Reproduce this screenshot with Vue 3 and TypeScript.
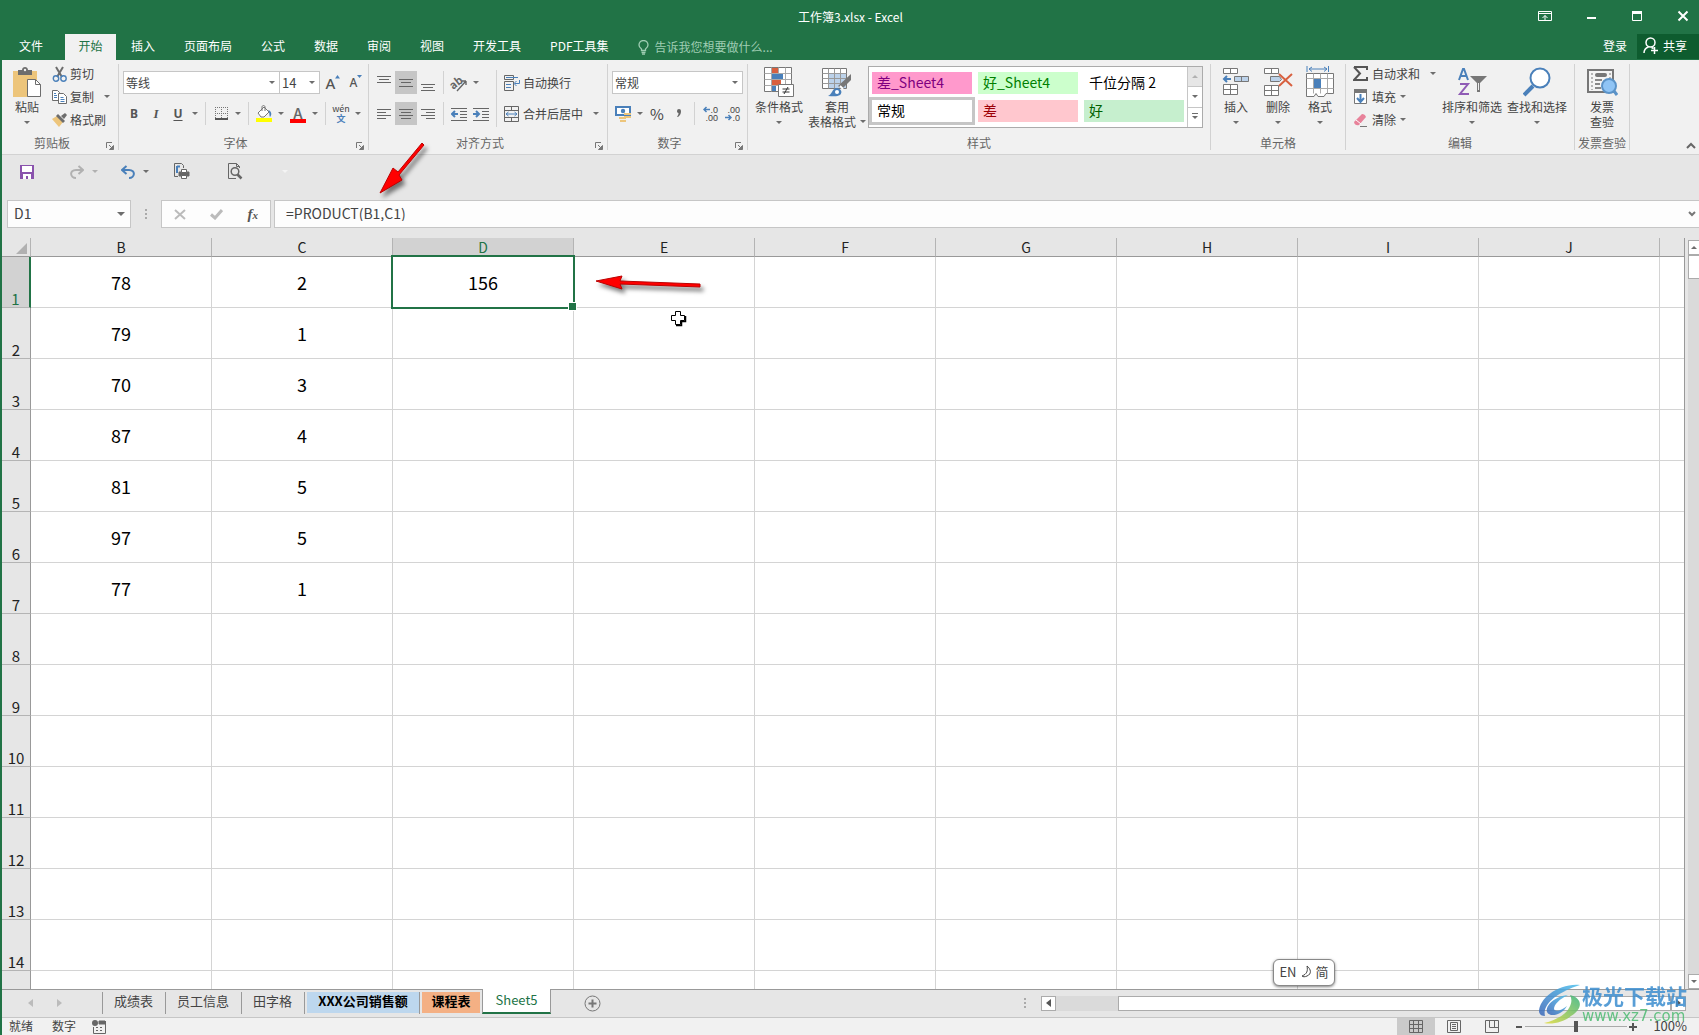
<script setup lang="ts">
import { ref } from 'vue'

const menuTabs = ['文件', '开始', '插入', '页面布局', '公式', '数据', '审阅', '视图', '开发工具', 'PDF工具集']
const columns = ['B', 'C', 'D', 'E', 'F', 'G', 'H', 'I', 'J']
const values: Record<string, string[]> = {
  B: ['78', '79', '70', '87', '81', '97', '77'],
  C: ['2', '1', '3', '4', '5', '5', '1'],
  D: ['156'],
}
const rows = Array.from({ length: 15 }, (_, i) => i + 1)
const cell = (col: string, row: number): string => values[col]?.[row - 1] ?? ''

const sheetTabs = [
  { name: '成绩表', kind: 'plain' },
  { name: '员工信息', kind: 'plain' },
  { name: '田字格', kind: 'plain' },
  { name: 'XXX公司销售额', kind: 'blue' },
  { name: '课程表', kind: 'orange' },
  { name: 'Sheet5', kind: 'opened' },
]

const cellStyles = [
  { name: '差_Sheet4', kind: 'pink' },
  { name: '好_Sheet4', kind: 'lime' },
  { name: '千位分隔 2', kind: 'none' },
  { name: '常规', kind: 'chosen' },
  { name: '差', kind: 'bad' },
  { name: '好', kind: 'good' },
]

const cellName = ref('D1')
const formula = ref('=PRODUCT(B1,C1)')
const zoom = ref(50)
</script>

<template>
  <div class="app">
    <header class="titlebar">
      <h1 class="title">工作簿3.xlsx - Excel</h1>
      <div class="winbtns">
        <button aria-label="功能区显示选项">
          <svg width="14" height="12" viewBox="0 0 14 12" fill="none" stroke="#fff"><path d="M.5 1.5h13v9H.5zM.5 3.5h13M7 10V5.500M4.500 8L7 5.500 9.500 8" /></svg>
        </button>
        <button aria-label="最小化">
          <svg width="12" height="12" viewBox="0 0 12 12"><path d="M2 7h9v2H2z" fill="#fff" /></svg>
        </button>
        <button aria-label="最大化">
          <svg width="12" height="12" viewBox="0 0 12 12"><path d="M1.500 2v8.500h9V2" fill="none" stroke="#fff" /><path d="M1 1h10v3H1z" fill="#fff" /></svg>
        </button>
        <button class="close" aria-label="关闭">
          <svg width="12" height="12" viewBox="0 0 12 12" stroke="#fff" stroke-width="2"><path d="M1.500 1.500l9 9M10.500 1.500l-9 9" /></svg>
        </button>
      </div>
    </header>

    <nav class="menu">
      <button v-for="t in menuTabs" :key="t" class="menutab" :class="{ file: t === '文件', current: t === '开始' }">{{ t }}</button>
      <button class="tell">
        <svg width="11" height="15" viewBox="0 0 11 15" fill="none" stroke="#9fcdb3" stroke-width="1.300"><path d="M3.500 10.500V9C2 8 1 6.800 1 5a4.500 4.500 0 0 1 9 0c0 1.800-1 3-2.500 4v1.500zM3.500 12.500h4M4 14.200h3" /></svg>
        告诉我您想要做什么...
      </button>
      <span class="grow"></span>
      <button class="login">登录</button>
      <button class="share">
        <svg width="16" height="17" viewBox="0 0 16 17" fill="none" stroke="#fff" stroke-width="1.500"><circle cx="7.500" cy="5.500" r="4.500" /><path d="M1 16c0-3 1.500-5 4.500-6M8.500 10.500l2 1M8 13.500h7M11.500 10v7" /></svg>
        共享
      </button>
    </nav>

    <section class="ribbon">
      <div class="group clip">
        <div class="body list-body">
          <button class="big paste">
            <span class="pic"><svg width="30" height="32" viewBox="0 0 30 32"><path d="M1 5h24v26H1z" fill="#edc57b" /><path d="M6 9V4h4c0-4 6-4 6 0h4v5z" fill="#6d6d6d" /><circle cx="13" cy="4" r="1.200" fill="#f1f1f1" /><path d="M15.500 13.500h8l5 5v12h-13z" fill="#fff" stroke="#6d6d6d" /><path d="M23.500 13.500v5h5" fill="none" stroke="#6d6d6d" /></svg></span>
            <span>粘贴</span><i class="caret under"></i>
          </button>
          <div class="list">
            <button><svg width="16" height="16" viewBox="0 0 16 16" fill="none"><path d="M4 1l6 10M11 1L5 11" stroke="#6d6d6d" stroke-width="2" /><circle cx="4" cy="12.500" r="2.700" stroke="#4a80ba" stroke-width="1.400" /><circle cx="11.500" cy="12.500" r="2.700" stroke="#4a80ba" stroke-width="1.400" /></svg>剪切</button>
            <button><svg width="16" height="16" viewBox="0 0 16 16" fill="#fff" stroke="#6d6d6d"><path d="M.5 1.500h5l2 2v8h-7z" /><path d="M6.500 4.500h5l3 3v7h-8z" /><path d="M2 4.500h2M2 6.500h3M2 8.500h3M8.500 8.500h3M8.500 10.500h4M8.500 12.500h4" stroke="#4a80ba" /></svg>复制<i class="caret far"></i></button>
            <button><svg width="16" height="16" viewBox="0 0 16 16"><path d="M0 7l5-3 6 6-4 5z" fill="#edc57b" /><path d="M4 4l2-2 7 7-2 2z" fill="#6d6d6d" /><path d="M9 4l4-3 2 2-3 4z" fill="#6d6d6d" /></svg>格式刷</button>
          </div>
        </div>
        <footer>剪贴板<button class="launch" aria-label="剪贴板设置"><svg width="8" height="8" viewBox="0 0 8 8" fill="none" stroke="#777"><path d="M.5 6V.5H6M3 3l3 3" /><path d="M7.500 3.500v4h-4z" fill="#777" /></svg></button></footer>
      </div>
      <i class="vsep"></i>

      <div class="group font">
        <div class="body rows">
          <div class="line">
            <label class="combo face"><select aria-label="字体"><option>等线</option></select><i class="caret"></i></label>
            <label class="combo size"><select aria-label="字号"><option>14</option></select><i class="caret"></i></label>
            <button class="ic grown" aria-label="增大字号"><b class="fa">A</b><svg width="5" height="4" viewBox="0 0 5 4"><path d="M0 3.500h5L2.500 0z" fill="#4a80ba" /></svg></button>
            <button class="ic" aria-label="减小字号"><b class="fa small">A</b><svg width="5" height="4" viewBox="0 0 5 4"><path d="M0 0h5L2.500 3z" fill="#4a80ba" /></svg></button>
          </div>
          <div class="line">
            <button class="ic"><b>B</b></button>
            <button class="ic"><b class="it">I</b></button>
            <button class="ic"><b class="un">U</b></button>
            <button class="dd" aria-label="下划线选项"><i class="caret"></i></button>
            <i class="sep"></i>
            <button class="ic" aria-label="边框"><svg width="13" height="13" viewBox="0 0 13 13" fill="none" stroke="#777"><path d="M.5 0v12M6.500 0v12M12.500 0v12M0 .5h13M0 6.500h13" stroke-dasharray="1 1" /><path d="M0 12h13" stroke="#555" stroke-width="2" /></svg></button>
            <button class="dd" aria-label="边框选项"><i class="caret"></i></button>
            <i class="sep"></i>
            <button class="ic" aria-label="填充颜色"><svg width="16" height="17" viewBox="0 0 16 17"><path d="M2 8l6-6 5 5-5 5H5z" fill="#fff" stroke="#777" /><path d="M6 6V2c0-2 3-2 3 0v4" fill="none" stroke="#777" /><path d="M12 5c4 1 4 5 2 7-1-2 0-4-2-7z" fill="#4a80ba" /><path d="M0 13h16v4H0z" fill="#ff0" /></svg></button>
            <button class="dd" aria-label="填充颜色选项"><i class="caret"></i></button>
            <button class="ic" aria-label="字体颜色"><span class="fcolor">A</span></button>
            <button class="dd" aria-label="字体颜色选项"><i class="caret"></i></button>
            <i class="sep"></i>
            <button class="ic wen"><span>wén</span><span class="zh">文</span></button>
            <button class="dd" aria-label="拼音选项"><i class="caret"></i></button>
          </div>
        </div>
        <footer>字体<button class="launch" aria-label="字体设置"><svg width="8" height="8" viewBox="0 0 8 8" fill="none" stroke="#777"><path d="M.5 6V.5H6M3 3l3 3" /><path d="M7.500 3.500v4h-4z" fill="#777" /></svg></button></footer>
      </div>
      <i class="vsep"></i>

      <div class="group align">
        <div class="body split">
          <div class="rows">
            <div class="line">
              <button class="ic" aria-label="顶端对齐"><svg width="14" height="16" viewBox="0 0 14 16" stroke="#666"><path d="M0 1.500h14M2 4.500h10M0 7.500h14" /></svg></button>
              <button class="ic on" aria-label="垂直居中"><svg width="14" height="16" viewBox="0 0 14 16" stroke="#666"><path d="M0 4.500h14M2 7.500h10M0 11.500h14" /></svg></button>
              <button class="ic" aria-label="底端对齐"><svg width="14" height="16" viewBox="0 0 14 16" stroke="#666"><path d="M0 9.500h14M2 12.500h10M0 15.500h14" /></svg></button>
              <i class="sep"></i>
              <button class="ic" aria-label="方向"><svg class="spill" width="18" height="18" viewBox="0 0 18 18"><text x="0" y="13" font-size="11" font-weight="bold" fill="#666" transform="rotate(-38 6 10)">ab</text><path d="M7 17L16 7M16 7h-4M16 7v4" fill="none" stroke="#666" stroke-width="1.400" /></svg></button>
              <button class="dd" aria-label="方向选项"><i class="caret"></i></button>
            </div>
            <div class="line">
              <button class="ic" aria-label="左对齐"><svg width="14" height="12" viewBox="0 0 14 12" stroke="#666"><path d="M0 1.500h14M0 4.500h9M0 7.500h14M0 10.500h9" /></svg></button>
              <button class="ic on" aria-label="居中"><svg width="14" height="12" viewBox="0 0 14 12" stroke="#666"><path d="M0 1.500h14M2 4.500h10M0 7.500h14M2 10.500h10" /></svg></button>
              <button class="ic" aria-label="右对齐"><svg width="14" height="12" viewBox="0 0 14 12" stroke="#666"><path d="M0 1.500h14M5 4.500h9M0 7.500h14M5 10.500h9" /></svg></button>
              <i class="sep"></i>
              <button class="ic" aria-label="减少缩进"><svg width="16" height="14" viewBox="0 0 16 14" fill="none" stroke="#666"><path d="M0 1.500h16M9 4.500h7M9 7.500h7M9 10.500h7M0 13.500h16" /><path d="M1 7h6M4 4L1 7l3 3" stroke="#4a80ba" stroke-width="2" /></svg></button>
              <button class="ic" aria-label="增加缩进"><svg width="16" height="14" viewBox="0 0 16 14" fill="none" stroke="#666"><path d="M0 1.500h16M9 4.500h7M9 7.500h7M9 10.500h7M0 13.500h16" /><path d="M0 7h6M3 4l3 3-3 3" stroke="#4a80ba" stroke-width="2" /></svg></button>
            </div>
          </div>
          <i class="sep tall"></i>
          <div class="rows wraps">
            <button class="txt"><svg width="17" height="16" viewBox="0 0 17 16" fill="none" stroke="#666"><path d="M.5 .5h9v4h-9zM.5 6.500h9v9h-9zM2 9.500h5M2 12.500h5" /><path d="M2 2.500h12M2 9.500h5M2 12.500h5M15.500 5v3.500h-5M12.500 6l-2.500 2.500 2.500 2.500" stroke="#4a80ba" /></svg>自动换行</button>
            <button class="txt"><svg width="17" height="16" viewBox="0 0 17 16" fill="none" stroke="#666"><path d="M.5 .5h14v15H.5zM.5 4.500h14M.5 11.500h14M7.500 .5v4M7.500 11.500v4" /><path d="M2 8h11M4.500 6L2 8l2.500 2M10.500 6L13 8l-2.500 2" stroke="#4a80ba" /></svg>合并后居中<i class="caret far"></i></button>
          </div>
        </div>
        <footer>对齐方式<button class="launch" aria-label="对齐设置"><svg width="8" height="8" viewBox="0 0 8 8" fill="none" stroke="#777"><path d="M.5 6V.5H6M3 3l3 3" /><path d="M7.500 3.500v4h-4z" fill="#777" /></svg></button></footer>
      </div>
      <i class="vsep"></i>

      <div class="group num">
        <div class="body rows">
          <div class="line"><label class="combo format"><select aria-label="数字格式"><option>常规</option></select><i class="caret"></i></label></div>
          <div class="line">
            <button class="ic" aria-label="会计数字格式"><svg width="17" height="16" viewBox="0 0 17 16"><path d="M1 1h14v8H1z" fill="#fff" stroke="#4a80ba" stroke-width="2" /><circle cx="8" cy="5" r="2.200" fill="#4a80ba" /><path d="M9 7h7v2H9zM9 10h7v2H9zM4 11h7v2H4zM5 14h6v2H5z" fill="#edc57b" /></svg></button>
            <button class="dd" aria-label="会计格式选项"><i class="caret"></i></button>
            <button class="ic pct">%</button>
            <button class="ic" aria-label="千位分隔样式"><svg width="6" height="10" viewBox="0 0 6 10"><path d="M1 2a2 2 0 0 1 4 0c0 3-1 4-3 6l-1-.5c1-1 1.500-2 1.500-3.500C1.500 4 1 3 1 2z" fill="#666" /></svg></button>
            <i class="sep"></i>
            <button class="ic dec" aria-label="增加小数位数"><span><svg width="7" height="7" viewBox="0 0 7 7" fill="none" stroke="#4a80ba" stroke-width="1.500"><path d="M1 3.500h6M3.500 1L1 3.500 3.500 6" /></svg>.0</span><span>.00</span></button>
            <button class="ic dec" aria-label="减少小数位数"><span>.00</span><span><svg width="7" height="7" viewBox="0 0 7 7" fill="none" stroke="#4a80ba" stroke-width="1.500"><path d="M0 3.500h6M3.500 1L6 3.500 3.500 6" /></svg>.0</span></button>
          </div>
        </div>
        <footer>数字<button class="launch" aria-label="数字设置"><svg width="8" height="8" viewBox="0 0 8 8" fill="none" stroke="#777"><path d="M.5 6V.5H6M3 3l3 3" /><path d="M7.500 3.500v4h-4z" fill="#777" /></svg></button></footer>
      </div>
      <i class="vsep"></i>

      <div class="group styles">
        <div class="body bigs">
          <button class="big cond">
            <span class="pic"><svg width="30" height="31" viewBox="0 0 30 31"><path d="M.5 .5h27v24H.5z" fill="#fff" stroke="#777" /><path d="M.5 6.500h27M.5 12.500h27M.5 18.500h27M7.500 .5v24M14.500 .5v24M21.500 .5v24" stroke="#aaa" fill="none" /><path d="M8 1h6v5H8zM8 13h9v5H8z" fill="#d8603f" /><path d="M8 7h11v5H8zM8 19h4v5H8z" fill="#4a80ba" /><path d="M14.500 17.500h15v12h-15z" fill="#fff" stroke="#777" /><path d="M18.500 22h7M18.500 25h7M24 20l-4 7" stroke="#333" fill="none" /></svg></span>
            <span>条件格式</span><i class="caret under"></i>
          </button>
          <button class="big tablefmt">
            <span class="pic"><svg width="30" height="29" viewBox="0 0 30 29"><path d="M.5 .5h24v20H.5z" fill="#fff" stroke="#777" /><path d="M6 6h18v14H6z" fill="#bcd2ea" /><path d="M.5 5.500h24M.5 10.500h24M.5 15.500h24M6.500 .5v20M12.500 .5v20M18.500 .5v20" stroke="#999" fill="none" /><path d="M29 6v6l-9 9-4-3z" fill="#777" /><path d="M18 18l3 3" stroke="#fff" stroke-width="2" /><path d="M6 28c4-1 4-8 9-8 4 1 6 4 3 7-3 2-8 1-12 1z" fill="#4a80ba" /><circle cx="15" cy="24" r="2" fill="#fff" /></svg></span>
            <span>套用</span><span class="with">表格格式<i class="caret"></i></span>
          </button>
          <div class="gallery">
            <div class="swatches">
              <button v-for="s in cellStyles" :key="s.name" class="swatch" :class="s.kind">{{ s.name }}</button>
            </div>
            <div class="scroller">
              <button class="dim" aria-label="上一行"><i class="caret up"></i></button>
              <button aria-label="下一行"><i class="caret"></i></button>
              <button aria-label="其他样式"><i class="caret more"></i></button>
            </div>
          </div>
        </div>
        <footer>样式</footer>
      </div>
      <i class="vsep"></i>

      <div class="group cells">
        <div class="body bigs">
          <button class="big">
            <span class="pic"><svg width="28" height="28" viewBox="0 0 28 28" fill="#fff" stroke="#777"><path d="M1.500 .5h14v5h-14zM8.500 .5v5M1.500 16.500h14v10h-14zM8.500 16.500v10M1.500 21.500h14" /><path d="M12.500 8.500h14v5h-14zM19.500 8.500v5" fill="#bcd2ea" /><path d="M2 11h7M5 8l-3 3 3 3" fill="none" stroke="#4a80ba" stroke-width="2" /></svg></span>
            <span>插入</span><i class="caret under"></i>
          </button>
          <button class="big">
            <span class="pic"><svg width="30" height="28" viewBox="0 0 30 28" fill="#fff" stroke="#777"><path d="M1.500 .5h14v5h-14zM8.500 .5v5M1.500 17.500h14v10h-14zM8.500 17.500v10M1.500 22.500h14" /><path d="M7.500 8.500h9l2 3-2 2h-9z" fill="#bcd2ea" /><path d="M16 6l13 12M29 6L16 18" fill="none" stroke="#d8603f" stroke-width="2" /></svg></span>
            <span>删除</span><i class="caret under"></i>
          </button>
          <button class="big">
            <span class="pic"><svg width="28" height="32" viewBox="0 0 28 32" fill="#fff" stroke="#777"><path d="M.5 7.500h27v20H20l-2 3h-6l-2-3-2 3H.5z" /><path d="M.5 12.500h27M.5 22.500h27M7.500 7.500v20M14.500 7.500v20M21.500 7.500v20" stroke="#aaa" /><path d="M8 13h7v9H8z" fill="#4a80ba" stroke="none" /><path d="M1 0v6M22.500 0v6M3 3h18M6 1L3 3l3 2.500M18 1l3 2-3 2.500" fill="none" stroke="#4a80ba" /></svg></span>
            <span>格式</span><i class="caret under"></i>
          </button>
        </div>
        <footer>单元格</footer>
      </div>
      <i class="vsep"></i>

      <div class="group edit">
        <div class="body list-body">
          <div class="list">
            <button><svg width="15" height="15" viewBox="0 0 15 15"><path d="M1 1h13v3M1 1l6 6.500L1 14h13v-3" fill="none" stroke="#555" stroke-width="2" /></svg>自动求和<i class="caret far"></i></button>
            <button><svg width="15" height="16" viewBox="0 0 15 16"><path d="M1.500 1.500h12v13h-12z" fill="#fff" stroke="#777" /><path d="M1 0h13v4H1z" fill="#777" /><path d="M7.500 5v8M4 9l3.500 4L11 9" fill="none" stroke="#4a80ba" stroke-width="2" /></svg>填充<i class="caret"></i></button>
            <button><svg width="15" height="14" viewBox="0 0 15 14"><path d="M1 9l8-8q3 0 4 3l-7 8q-4 1-5-3z" fill="#e8829a" /><path d="M3 7l5 4" stroke="#fff" /><path d="M7 13.500h7" stroke="#777" /></svg>清除<i class="caret"></i></button>
          </div>
          <button class="big wide">
            <span class="pic"><svg width="30" height="30" viewBox="0 0 30 30" fill="none" stroke-width="2"><path d="M2 13L6 2h1l4 11M3 9h7" stroke="#4a80ba" /><path d="M3 17h8L3 27h9" stroke="#8f5bb5" /><path d="M13 9h17l-7 7v9h-3v-9z" fill="#777" /><path d="M21.500 16v7" stroke="#eee" stroke-width="1" /></svg></span>
            <span>排序和筛选</span><i class="caret under"></i>
          </button>
          <button class="big wide">
            <span class="pic"><svg width="28" height="30" viewBox="0 0 28 30"><path d="M1 28l9-9" stroke="#4a80ba" stroke-width="4" /><circle cx="17" cy="11" r="9.500" fill="#fff" stroke="#4a80ba" stroke-width="2" /></svg></span>
            <span>查找和选择</span><i class="caret under"></i>
          </button>
        </div>
        <footer>编辑</footer>
      </div>
      <i class="vsep"></i>

      <div class="group invoice">
        <div class="body bigs">
          <button class="big">
            <span class="pic"><svg width="32" height="28" viewBox="0 0 32 28"><path d="M2 2h25v22H2z" fill="#f4f4f4" stroke="#777" stroke-width="2" /><path d="M6 5v17M24 5v6" stroke="#777" stroke-dasharray="2 2" /><rect x="9" y="5" width="12" height="4" rx="2" fill="#777" /><path d="M9 12h7M9 16h5M9 20h6" stroke="#666" stroke-width="1.500" /><circle cx="23" cy="18" r="7" fill="#8fc4f5" stroke="#5b93c8" stroke-width="2" /><path d="M28 23l3 4" stroke="#5b93c8" stroke-width="3" /></svg></span>
            <span>发票</span><span>查验</span>
          </button>
        </div>
        <footer>发票查验</footer>
      </div>
      <i class="vsep"></i>
      <span class="grow"></span>
      <button class="collapse" aria-label="折叠功能区"><svg width="10" height="7" viewBox="0 0 10 7" fill="none" stroke="#666" stroke-width="2"><path d="M1 6l4-4 4 4" /></svg></button>
    </section>

    <div class="quick">
      <button aria-label="保存"><svg width="14" height="14" viewBox="0 0 14 14"><path d="M0 0h14v14H0z" fill="#8a53ad" /><path d="M2 1h10v6H2zM3 9h8v5H8v-3H6v3H3z" fill="#fff" /></svg></button>
      <button class="q2" aria-label="恢复"><svg width="14" height="14" viewBox="0 0 14 14" fill="none" stroke="#b1b1b1" stroke-width="2"><path d="M13 5H6C-1 5 0 13 6 13M8.500 1L13 5 8.500 9" /></svg><i class="caret pale"></i></button>
      <button class="q3" aria-label="撤消"><svg width="14" height="14" viewBox="0 0 14 14" fill="none" stroke="#4a80ba" stroke-width="2"><path d="M1 5h7c7 0 6 8 0 8M5.500 1L1 5l4.500 4" /></svg><i class="caret"></i></button>
      <button class="q4" aria-label="快速打印"><svg width="17" height="17" viewBox="0 0 17 17" fill="none" stroke="#666"><path d="M5 13.500H1.500V.5h7l2 2V5" /><path d="M4 3.500h3M4 3v7" stroke="#4a80ba" stroke-width="2" /><path d="M6 9h10v4H6z" fill="#666" /><path d="M8.500 6.500h5v3h-5zM8.500 12.500h5v3h-5z" fill="#fff" /></svg></button>
      <button class="q5" aria-label="打印预览"><svg width="15" height="17" viewBox="0 0 15 17" fill="none" stroke="#666"><path d="M8 15.500H.5V.5h8l3 3V5M8.500 .5v3h3" /><circle cx="7" cy="8.500" r="3.800" stroke-width="1.500" /><path d="M9.500 11.500l4 4" stroke-width="2.500" /></svg></button>
      <button class="q6" aria-label="自定义快速访问工具栏"><i class="caret white"></i></button>
    </div>

    <div class="fbar">
      <div class="namebox"><input v-model="cellName" aria-label="名称框" /><button aria-label="名称列表"><i class="caret large"></i></button></div>
      <i class="dots"></i>
      <div class="fxbox">
        <button aria-label="取消"><svg width="12" height="11" viewBox="0 0 12 11" stroke="#bbb" stroke-width="2"><path d="M1 1l10 9M11 1L1 10" /></svg></button>
        <button aria-label="输入"><svg width="13" height="11" viewBox="0 0 13 11" fill="none" stroke="#bbb" stroke-width="3"><path d="M1 5.500L5 9l7-8" /></svg></button>
        <button class="fx" aria-label="插入函数">f<sub>x</sub></button>
      </div>
      <div class="formula"><input v-model="formula" aria-label="编辑栏" /><button aria-label="展开编辑栏"><svg width="8" height="6" viewBox="0 0 8 6" fill="none" stroke="#777" stroke-width="2"><path d="M1 1l3 3 3-3" /></svg></button></div>
    </div>

    <main class="work">
      <div class="gridwrap">
        <table class="grid">
          <colgroup><col class="rh" /><col v-for="c in columns" :key="c" class="dc" /><col /></colgroup>
          <thead>
            <tr><th class="corner"><svg width="11" height="11" viewBox="0 0 11 11"><path d="M11 0v11H0z" fill="#b1b1b1" /></svg></th><th v-for="c in columns" :key="c" scope="col" :class="{ sel: c === 'D' }">{{ c }}</th><th class="rest"></th></tr>
          </thead>
          <tbody>
            <tr v-for="r in rows" :key="r">
              <th scope="row" :class="{ sel: r === 1 }">{{ r < 15 ? r : '' }}</th>
              <td v-for="c in columns" :key="c" :class="{ active: c === 'D' && r === 1 }">{{ cell(c, r) }}</td>
              <td class="rest"></td>
            </tr>
          </tbody>
        </table>
        <svg class="cursor" width="17" height="17" viewBox="0 0 17 17"><path d="M5.500 1.500h5v4h4v5h-4v4h-5v-4h-4v-5h4z" fill="#fff" stroke="#000" /><path d="M6 15.500h5.500V11.500H15.500V6" fill="none" stroke="#000" stroke-width="1.500" /></svg>
        <svg class="arrow side" width="116" height="30" viewBox="0 0 116 30"><path d="M4 9l26-5-2 5 80 3v3l-80-3 2 5z" fill="#f00" stroke="#b00" stroke-width="1" /></svg>
        <div class="ime">EN<svg width="11" height="13" viewBox="0 0 11 13" fill="none" stroke="#444"><path d="M6 1c4 3 5 8 0 10-2 1-4 1-5 0 5-2 6-5 5-10z" /></svg>简</div>
      </div>
      <div class="vscroll">
        <button aria-label="向上滚动"><i class="caret up"></i></button>
        <span class="thumb"></span>
        <span class="grow"></span>
        <button aria-label="向下滚动"><i class="caret"></i></button>
      </div>
    </main>

    <div class="sheets">
      <button class="nav" aria-label="上一张工作表"><svg width="5" height="8" viewBox="0 0 5 8"><path d="M5 0v8L0 4z" fill="#bbb" /></svg></button>
      <button class="nav" aria-label="下一张工作表"><svg width="5" height="8" viewBox="0 0 5 8"><path d="M0 0v8l5-4z" fill="#bbb" /></svg></button>
      <div class="tabs">
        <button v-for="s in sheetTabs" :key="s.name" class="sheet" :class="s.kind"><span>{{ s.name }}</span></button>
      </div>
      <button class="add" aria-label="新工作表"><svg width="17" height="17" viewBox="0 0 17 17" fill="none" stroke="#777"><circle cx="8.500" cy="8.500" r="7.500" /><path d="M8.500 4.500v8M4.500 8.500h8" stroke-width="2" /></svg></button>
      <span class="grow"></span>
      <i class="dots"></i>
      <div class="hscroll">
        <button aria-label="向左滚动"><svg width="5" height="8" viewBox="0 0 5 8"><path d="M5 0v8L0 4z" fill="#555" /></svg></button>
        <span class="track"></span><span class="thumb"></span>
        <button aria-label="向右滚动"><svg width="5" height="8" viewBox="0 0 5 8"><path d="M0 0v8l5-4z" fill="#555" /></svg></button>
      </div>
    </div>

    <footer class="status">
      <span class="word">就绪</span><span class="word">数字</span>
      <svg width="14" height="14" viewBox="0 0 14 14" fill="none" stroke="#666"><circle cx="3" cy="3" r="3" fill="#666" stroke="none" /><path d="M7 1h6v3H7z" fill="#666" /><path d="M1.500 7v6.500h12V1" /><path d="M4 7.500h2M8 7.500h2M4 10.500h2M8 10.500h2" /></svg>
      <span class="grow"></span>
      <button class="view on" aria-label="普通"><svg width="14" height="13" viewBox="0 0 14 13" fill="none" stroke="#666"><path d="M.5 .5h13v12H.5zM.5 4.500h13M.5 8.500h13M4.500 .5v12M9.500 .5v12" /></svg></button>
      <button class="view" aria-label="页面布局"><svg width="14" height="13" viewBox="0 0 14 13" fill="none" stroke="#666"><path d="M.5 .5h13v12H.5zM3.500 2.500h7v8h-7zM5 4.500h4M5 6.500h4M5 8.500h4" /></svg></button>
      <button class="view" aria-label="分页预览"><svg width="14" height="13" viewBox="0 0 14 13" fill="none" stroke="#666"><path d="M.5 .5h13v12H.5zM4.500 .5v7h9M9.500 .5v7" /></svg></button>
      <button class="zb minus" aria-label="缩小"><svg width="8" height="8" viewBox="0 0 8 8"><path d="M1 3h6v2H1z" fill="#555" /></svg></button>
      <input v-model="zoom" class="slider" type="range" min="0" max="100" aria-label="缩放" />
      <button class="zb" aria-label="放大"><svg width="8" height="8" viewBox="0 0 8 8"><path d="M0 3h8v2H0zM3 0h2v8H3z" fill="#555" /></svg></button>
      <span class="pc">100%</span>
    </footer>

    <svg class="arrow down" width="60" height="66" viewBox="0 0 60 66"><path d="M48 6L24 35l-5-4L6 56l22-13-3-5L50 8z" fill="#f00" stroke="#b00" stroke-width="1" /></svg>

    <div class="mark">
      <svg width="42" height="40" viewBox="0 0 42 40">
        <defs>
          <linearGradient id="blue" x1="0" y1="1" x2="1" y2="0"><stop offset="0" stop-color="#3a66b8" /><stop offset="1" stop-color="#4cc0ee" /></linearGradient>
          <linearGradient id="green" x1="0" y1="1" x2="1" y2="0"><stop offset="0" stop-color="#e3dc3c" /><stop offset="1" stop-color="#35b27c" /></linearGradient>
        </defs>
        <path d="M41 1C20-1 0 14 0 28c1 3 3 4 6 4C3 20 19 8 41 1z" fill="url(#blue)" />
        <path d="M29 11C17 12 6 21 8 28c3 6 15 3 20-6-6 5-12 6-13 3 0-5 6-10 14-14z" fill="url(#blue)" />
        <path d="M31 11c13 3 13 14 1 21-7 6-19 9-27 7 13-3 22-9 25-15 3-5 3-9 1-13z" fill="url(#green)" />
      </svg>
      <div class="marktext"><strong>极光下载站</strong><span>www.xz7.com</span></div>
    </div>
  </div>
</template>

<style>
body { overflow: hidden; }
</style>

<style scoped>
* { box-sizing: border-box; }
.app {
  position: relative;
  display: flex;
  flex-direction: column;
  height: 100vh;
  overflow: hidden;
  border-left: 2px solid #217346;
  background: #e6e6e6;
  color: #444;
  font: 12px/16px "Noto Sans CJK SC", sans-serif;
}
button, input, select { font: inherit; color: inherit; margin: 0; padding: 0; border: 0; background: none; border-radius: 0; outline: 0; }
button { display: flex; align-items: center; justify-content: center; flex: none; white-space: nowrap; }
svg { display: block; flex: none; }
.grow { flex: 1; }
.caret { display: block; flex: none; width: 0; height: 0; border: 3px solid transparent; border-top-color: #6d6d6d; border-bottom: 0; }
.caret.up { border-top: 0; border-bottom: 3px solid #6d6d6d; }
.caret.large { border-width: 4px 4px 0; }
.caret.pale { border-top-color: #b1b1b1; }
.caret.white { border-top-color: #f4f4f4; }

.titlebar { position: relative; height: 34px; flex: none; background: #217346; color: #fff; }
.title { margin: 0; text-align: center; font-size: 12px; font-weight: 400; line-height: 34px; }
.winbtns { position: absolute; right: 0; top: 0; display: flex; }
.winbtns button { width: 46px; height: 32px; }
.winbtns .close { width: 32px; margin-left: 7px; }
.menu { display: flex; height: 26px; flex: none; background: #217346; color: #fff; }
.menutab { padding: 0 14px 2px; margin-right: 1px; }
.menutab.file { width: 63px; padding: 0 5px 2px 0; margin: 0; }
.menutab.current { width: 51px; background: #f1f1f1; color: #217346; }
.tell { gap: 6px; margin-left: 14px; color: #9fcdb3; }
.login { margin-right: 10px; padding-bottom: 2px; }
.share { width: 62px; gap: 4px; height: 25px; padding: 0 6px 2px 0; background: #0e5c2f; }

.ribbon { display: flex; height: 95px; flex: none; background: #f1f1f1; border-bottom: 1px solid #d2d2d2; }
.vsep { width: 1px; margin: 4px 0; background: #d2d2d2; flex: none; }
.group { display: flex; flex-direction: column; flex: none; }
.clip { width: 116px; }
.font { width: 249px; }
.align { width: 238px; }
.num { width: 139px; }
.styles { width: 462px; }
.cells { width: 134px; }
.edit { width: 228px; }
.invoice { width: 54px; }
.body { flex: 1; display: flex; }
.group footer { position: relative; height: 21px; line-height: 19px; text-align: center; color: #666; white-space: nowrap; }
.clip footer { padding-right: 16px; }
.font footer { padding-right: 16px; }
.align footer { padding-right: 16px; }
.num footer { padding-right: 16px; }
.launch { position: absolute; right: 4px; bottom: 4px; }
.list { padding-top: 2px; }
.list button { height: 23px; gap: 4px; justify-content: flex-start; }
.clip .list button { gap: 2px; }
.clip .far { margin-left: 8px; }
.far { margin-left: 8px; }
.edit .list { width: 93px; padding-left: 7px; }
.edit .far { margin-left: 6px; }
.big { flex-direction: column; justify-content: flex-start; height: 73px; padding-top: 6px; line-height: 15px; }
.pic { display: flex; align-items: center; height: 32px; margin-bottom: 1px; }
.under { margin-top: 7px; }
.paste { width: 50px; }
.cells .bigs { padding-left: 4px; }
.cells .big { width: 42px; }
.edit .wide { width: 66px; }
.edit .wide:last-child { width: 64px; }
.invoice .big { width: 54px; }
.cond { width: 62px; }
.tablefmt { width: 54px; }
.with { display: flex; align-items: center; gap: 4px; }
.rows { display: flex; flex-direction: column; gap: 8px; padding: 11px 0 0 4px; }
.line { display: flex; height: 23px; }
.ic { width: 22px; height: 23px; }
.on { background: #c6c6c6; }
.dd { width: 12px; }
.sep { width: 1px; margin: 0 4px; background: #d2d2d2; flex: none; }
.tall { margin: 10px 4px 6px; }
.combo { position: relative; display: flex; align-items: center; height: 23px; border: 1px solid #c6c6c6; background: #fff; }
.combo select { width: 100%; height: 100%; padding-left: 2px; appearance: none; }
.combo .caret { position: absolute; right: 4px; top: 9px; }
.face { width: 157px; }
.size { width: 41px; margin-left: -1px; }
.size select { font-size: 13px; }
.format { width: 131px; }
.grown { margin: 0 1px 0 2px; }
.fa { font-size: 15px; font-weight: 500; color: #666; }
.fa.small { font-size: 12px; }
.fa + svg { margin-bottom: 12px; }
.ic b { font-family: "Noto Sans", sans-serif; color: #555; }
.ic .it { font-style: italic; font-family: "Liberation Serif", serif; font-size: 13px; }
.un { text-decoration: underline; text-underline-offset: 2px; }
.spill { overflow: visible; }
.fcolor { width: 16px; height: 18px; line-height: 15px; font-size: 15px; font-weight: 500; border-bottom: 4px solid #f00; color: #666; text-align: center; }
.wen { flex-direction: column; font-size: 9px; line-height: 9px; }
.wen .zh { line-height: 11px; color: #4a80ba; font-weight: 700; }
.pct { font-size: 15px; }
.dec { flex-direction: column; align-items: flex-end; padding-right: 3px; font: 9px/8px "Liberation Sans", sans-serif; }
.dec span { display: flex; align-items: center; }
.wraps { padding-left: 3px; }
.txt { justify-content: flex-start; gap: 2px; height: 23px; }

.gallery { display: flex; height: 62px; margin-top: 6px; border: 1px solid #ababab; background: #fff; margin-left: 4px; }
.swatches { display: grid; grid-template-columns: repeat(3, 100px); grid-auto-rows: 22px; gap: 6px; padding: 5px 3px; }
.swatch { justify-content: flex-start; padding: 0 0 2px 5px; font-size: 14px; color: #000; }
.pink { background: #ff99cc; color: #800080; }
.lime { background: #ccffcc; color: #008000; }
.bad { background: #ffc7ce; color: #9c0006; }
.good { background: #c6efce; color: #006100; }
.chosen { outline: 3px solid #c6c6c6; }
.scroller { width: 15px; display: flex; flex-direction: column; border-left: 1px solid #c6c6c6; }
.scroller button { flex: 1; border-bottom: 1px solid #c6c6c6; }
.scroller button:last-child { border-bottom: 0; }
.scroller .dim { background: #e6e6e6; }
.dim .up { border-bottom-color: #b1b1b1; }
.more { position: relative; }
.more::before { content: ""; position: absolute; left: -3px; top: -6px; width: 6px; height: 1px; background: #6d6d6d; }
.collapse { align-self: flex-end; width: 16px; height: 18px; }

.quick { display: flex; align-items: center; height: 45px; padding: 0 0 12px 18px; flex: none; }
.quick button { gap: 8px; }
.q2 { margin-left: 36px; }
.q3 { margin-left: 23px; }
.q4 { margin-left: 24px; }
.q5 { margin-left: 38px; }
.q6 { margin-left: 39px; }

.fbar { display: flex; height: 38px; padding-bottom: 10px; flex: none; font-size: 14px; }
.namebox, .fxbox, .formula { display: flex; align-items: center; border: 1px solid #c6c6c6; background: #fdfdfd; }
.namebox { width: 124px; margin-left: 5px; }
.namebox input { flex: 1; min-width: 0; padding: 0 0 2px 6px; }
.namebox button { width: 18px; }
.dots { width: 2px; height: 11px; align-self: center; background: repeating-linear-gradient(#aaa 0 2px, transparent 2px 4px); flex: none; }
.fbar .dots { margin: 0 14px; }
.fxbox { width: 110px; justify-content: space-around; }
.fx { font: italic 700 15px/15px "Liberation Serif", serif; color: #555; }
.fx sub { font-size: 11px; vertical-align: baseline; margin-top: 3px; }
.formula { flex: 1; margin-left: 3px; border-right: 0; }
.formula input { flex: 1; padding: 0 0 2px 11px; }
.formula button { width: 14px; }

.work { display: flex; flex: 1; min-height: 0; }
.gridwrap { position: relative; flex: 1; min-width: 0; overflow: hidden; }
.grid { width: 100%; table-layout: fixed; border-collapse: separate; border-spacing: 0; background: #fff; border-right: 1px solid #999; }
.rh { width: 29px; }
.dc { width: 181px; }
.grid th { padding: 0; font-weight: 400; font-size: 14px; color: #222; background: #e6e6e6; border-right: 1px solid #b4b4b4; }
.grid thead th { height: 19px; line-height: 18px; border-bottom: 1px solid #999; }
.grid thead .rest { border-right: 0; }
.corner svg { margin: 3px 3px 0 auto; }
.grid tbody th { height: 51px; vertical-align: bottom; line-height: 16px; font-size: 15px; border-right-color: #999; border-bottom: 1px solid #b4b4b4; }
.grid .sel { background: #d2d2d2; color: #217346; }
.grid tbody th.sel { border-right: 2px solid #217346; }
.grid td { padding: 0; text-align: center; font-size: 18px; line-height: 24px; color: #000; border-right: 1px solid #d4d4d4; border-bottom: 1px solid #d4d4d4; }
.grid td.rest { border-right: 0; }
.active { position: relative; z-index: 1; }
.active::before { content: ""; position: absolute; inset: -2px; border: 2px solid #217346; }
.active::after { content: ""; position: absolute; right: -4px; bottom: -4px; width: 7px; height: 7px; background: #217346; border: 1px solid #fff; }
.arrow { position: absolute; z-index: 3; filter: drop-shadow(3px 4px 2px rgba(0, 0, 0, 0.5)); }
.arrow.side { left: 590px; top: 34px; }
.arrow.down { left: 372px; top: 137px; }
.cursor { position: absolute; left: 668px; top: 72px; }
.ime { position: absolute; right: 350px; bottom: 3px; display: flex; align-items: center; justify-content: center; gap: 4px; width: 62px; height: 27px; padding-bottom: 2px; border: 1px solid #888; border-radius: 6px; background: #fff; box-shadow: 0 1px 3px rgba(0, 0, 0, 0.5); font-size: 13px; z-index: 2; }
.vscroll { display: flex; flex-direction: column; width: 11px; margin: 2px 0 0 3px; background: #dadada; flex: none; }
.vscroll button { height: 15px; background: #fff; border: 1px solid #ababab; border-right: 0; }
.vscroll .thumb { height: 24px; background: #fff; border: 1px solid #ababab; border-right: 0; }

.sheets { display: flex; align-items: center; height: 28px; padding-bottom: 1px; border-top: 1px solid #999; flex: none; font-size: 13px; }
.nav { width: 29px; }
.nav:first-child { margin-left: 14px; }
.tabs { display: flex; align-self: stretch; margin-left: 28px; }
.sheet { align-items: flex-start; height: 22px; margin-top: 2px; border-left: 1px solid #999; }
.sheet.plain { padding: 0 12px 0 11px; }
.sheet span { display: block; height: 21px; line-height: 18px; }
.sheet.blue, .sheet.orange { padding-left: 2px; color: #000; font-weight: 700; }
.sheet.blue span { width: 112px; background: #bdd7ee; }
.sheet.orange { margin-right: 2px; }
.sheet.orange span { width: 58px; background: #f4b084; }
.sheet.opened { width: 69px; height: 25px; margin-top: -1px; padding-top: 2px; background: #fff; color: #217346; border: 1px solid #999; border-top: 0; border-bottom: 2px solid #217346; }
.add { margin-left: 33px; }
.hscroll { display: flex; width: 645px; height: 15px; margin: 0 13px 0 15px; }
.hscroll button { width: 15px; background: #fff; border: 1px solid #ababab; }
.track { width: 62px; background: #dadada; }
.hscroll .thumb { flex: 1; background: #fff; border: 1px solid #ababab; }

.status { display: flex; align-items: center; height: 18px; padding-right: 12px; flex: none; border-top: 1px solid #c6c6c6; background: #f1f1f1; }
.word { margin: 0 12px 2px 7px; }
.status > svg { margin-left: 4px; }
.view { width: 38px; height: 17px; }
.view.on { background: #cacaca; }
.zb { width: 12px; }
.minus { margin-left: 2px; }
.slider { width: 102px; height: 14px; appearance: none; background: linear-gradient(#aaa, #aaa) center / 100% 1px no-repeat; }
.slider::-webkit-slider-thumb { appearance: none; width: 4px; height: 11px; background: #555; }
.pc { margin: 0 0 2px 14px; font-size: 13px; }

.mark { position: absolute; right: 12px; bottom: 9px; z-index: 4; display: flex; gap: 1px; opacity: 0.85; }
.marktext { display: flex; flex-direction: column; }
.marktext strong { font-size: 21px; line-height: 22px; font-weight: 700; color: #3c8ed0; }
.marktext span { font: 15px/20px "DejaVu Sans", sans-serif; color: #4dbb72; }
</style>
